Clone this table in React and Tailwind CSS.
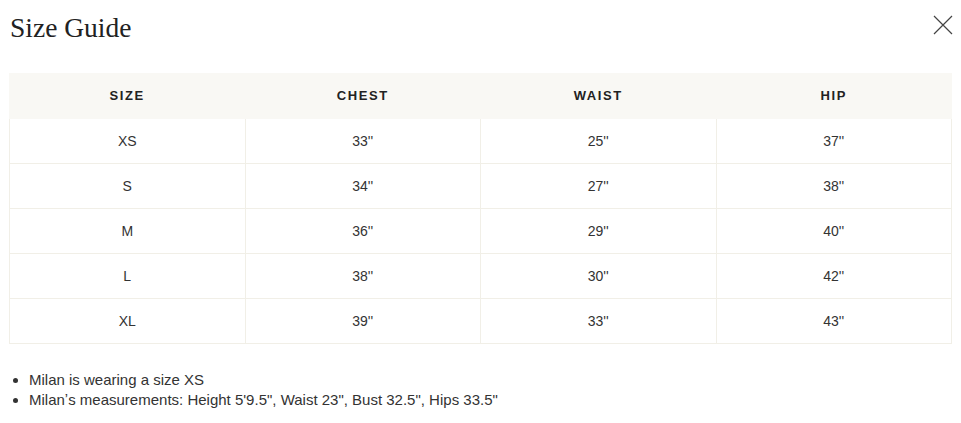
import React from 'react';

const rows = [
  ['XS', "33''", "25''", "37''"],
  ['S', "34''", "27''", "38''"],
  ['M', "36''", "29''", "40''"],
  ['L', "38''", "30''", "42''"],
  ['XL', "39''", "33''", "43''"],
];

const headers = ['SIZE', 'CHEST', 'WAIST', 'HIP'];

export default function App() {
  return (
    <div className="w-[961px] h-[423px] bg-white px-[9px] text-[#222]" style={{ fontFamily: '"Liberation Sans", Arial, sans-serif' }}>
      <div className="flex items-start justify-between pt-[12px]">
        <h2 className="pl-[1px] text-[27.5px] leading-[32px] text-[#222]" style={{ fontFamily: '"Liberation Serif", "Times New Roman", serif' }}>
          Size Guide
        </h2>
        <button className="mt-[3px] mr-[-1px] w-[20px] h-[20px]" aria-label="Close">
          <svg viewBox="0 0 20 20" className="w-[20px] h-[20px]" stroke="#444" strokeWidth="1.2" fill="none">
            <path d="M1 1L19 19M19 1L1 19" />
          </svg>
        </button>
      </div>

      <table className="mt-[29px] w-[943px] table-fixed border-collapse text-center">
        <thead>
          <tr className="bg-[#f9f8f4] h-[45px]">
            {headers.map((h) => (
              <th key={h} className="text-[13px] font-bold tracking-[1.6px] text-[#222] border border-[#f9f8f4]">
                {h}
              </th>
            ))}
          </tr>
        </thead>
        <tbody>
          {rows.map((r) => (
            <tr key={r[0]} className="h-[45px]">
              {r.map((c, i) => (
                <td key={i} className="border border-[#f1efe7] text-[14px] text-[#333]">
                  {c}
                </td>
              ))}
            </tr>
          ))}
        </tbody>
      </table>

      <ul className="mt-[26px] list-disc pl-[20px] text-[15px] leading-[20px] text-[#333]">
        <li>Milan is wearing a size XS</li>
        <li>Milan&#700;s measurements: Height 5'9.5", Waist 23", Bust 32.5", Hips 33.5"</li>
      </ul>
    </div>
  );
}
